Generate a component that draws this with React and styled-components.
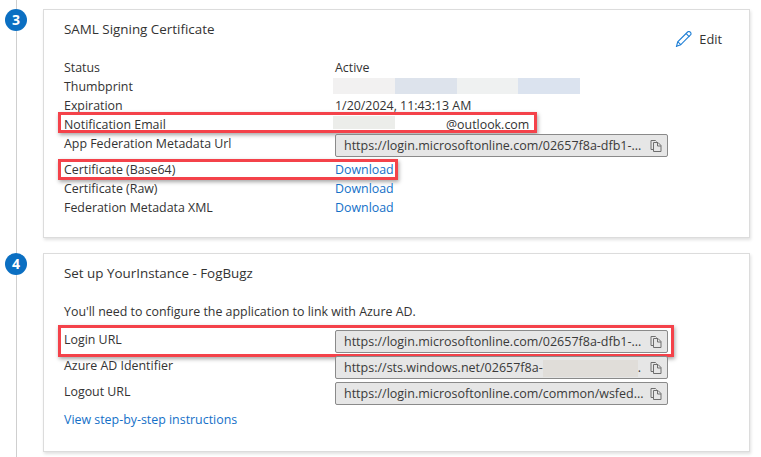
import styled, { createGlobalStyle } from "styled-components";

const GlobalStyle = createGlobalStyle`
  html, body {
    margin: 0;
    background: #fff;
    overflow: hidden;
  }
  body {
    font-family: "Open Sans", "Noto Sans", sans-serif;
    font-size: 12.4px;
    color: #333;
  }
`;

const Page = styled.div`
  width: 761px;
  height: 457px;
  box-sizing: border-box;
  padding-top: 9px;
  display: flex;
  flex-direction: column;
  gap: 15px;
  background: linear-gradient(#cfcfcf, #cfcfcf) 16px 0 / 1px 100% no-repeat;
`;

const Step = styled.section`
  display: flex;
  align-items: flex-start;
  padding-left: 5px;
`;

const Badge = styled.div`
  width: 22px;
  height: 22px;
  flex: none;
  margin-right: 16px;
  border-radius: 50%;
  background: #0b6fc2;
  color: #fff;
  font-family: "Open Sans", sans-serif;
  font-weight: 700;
  font-size: 14px;
  line-height: 22px;
  text-align: center;
`;

const Card = styled.div`
  position: relative;
  width: 707px;
  height: ${(p) => p.$height}px;
  box-sizing: border-box;
  padding: 10px 20px 0;
  background: #fff;
  border: 1px solid #dcdcdc;
  box-shadow: 1px 2px 3px rgba(0, 0, 0, 0.12);
`;

const Title = styled.h2`
  margin: 0 0 ${(p) => p.$gap}px;
  font-size: 13.4px;
  font-weight: 400;
  line-height: 19px;
  color: #333;
`;

const EditButton = styled.div`
  position: absolute;
  top: 20px;
  right: 27px;
  display: flex;
  align-items: center;
  gap: 7px;
  font-size: 12.8px;
  line-height: 18px;
`;

const Intro = styled.p`
  margin: 0 0 9px;
  line-height: 19px;
`;

const Rows = styled.div`
  display: flex;
  flex-direction: column;
`;

const Row = styled.div`
  position: relative;
  display: grid;
  grid-template-columns: 271px 1fr;
  height: ${(p) => p.$height || 19}px;
  line-height: 19px;
  white-space: nowrap;
`;

const Value = styled.div`
  display: flex;
  height: 19px;
`;

const Blur = styled.span`
  display: inline-block;
  flex: none;
  width: ${(p) => p.$width}px;
  height: ${(p) => p.$height || 16}px;
  margin-top: ${(p) => p.$top || 1}px;
  margin-left: ${(p) => p.$left || 0}px;
  background: ${(p) => p.$color};
`;

const Link = styled.a`
  color: #1470c8;
  text-decoration: none;
`;

const Field = styled.div`
  width: 333px;
  height: 23px;
  box-sizing: border-box;
  display: flex;
  align-items: center;
  padding: 0 5px 0 8px;
  background: #e6e6e6;
  border: 1px solid #8a8a8a;
  border-radius: 2px;
  font-size: 12.5px;
  color: #3a3a3a;
`;

const FieldText = styled.span`
  flex: 1;
  display: flex;
  align-items: center;
  overflow: hidden;
`;

const Highlight = styled.div`
  position: absolute;
  left: -6px;
  top: ${(p) => p.$top}px;
  width: ${(p) => p.$width}px;
  height: ${(p) => p.$height}px;
  box-sizing: border-box;
  border: 3px solid #f4424a;
  box-shadow: 1px 2px 4px rgba(0, 0, 0, 0.35);
  pointer-events: none;
`;

const Footer = styled.div`
  margin-top: 2px;
  line-height: 19px;
`;

const PencilIcon = () => (
  <svg width="17" height="17" viewBox="0 0 17 17" fill="none" stroke="#1f7fd6" strokeWidth="1.1">
    <path d="M1.5 15.500l1.200-4.600L12.600 1c.7-.7 1.800-.7 2.500 0l.4.4c.7.7.7 1.800 0 2.500l-9.900 9.900-4.600 1.700z" />
    <path d="M11.200 2.600l3.200 3.200M2.900 10.900l3.200 2.900" />
  </svg>
);

const CopyIcon = () => (
  <svg width="12" height="12" viewBox="0 0 12 12" fill="none" stroke="#6e6e6e" strokeWidth="1">
    <path d="M3.500 9.500h-2.500v-9h4.500l1 1" />
    <path d="M3.500 2.500h4.500l3 3v6h-7.500z" />
    <path d="M7.500 2.500v3.500h3.500" />
  </svg>
);

const UrlField = ({ children }) => (
  <Field>
    <FieldText>{children}</FieldText>
    <CopyIcon />
  </Field>
);

export default function App() {
  return (
    <Page>
      <GlobalStyle />
      <Step>
        <Badge>3</Badge>
        <Card $height={229}>
          <Title $gap={19}>SAML Signing Certificate</Title>
          <EditButton>
            <PencilIcon />
            Edit
          </EditButton>
          <Rows>
            <Row>
              <span>Status</span>
              <Value>Active</Value>
            </Row>
            <Row>
              <span>Thumbprint</span>
              <Value>
                <Blur $width={62} $left={-2} $color="#f2f1f1" />
                <Blur $width={62} $color="#dde3ec" />
                <Blur $width={61} $color="#eff1f1" />
                <Blur $width={62} $color="#dbe3ef" />
              </Value>
            </Row>
            <Row>
              <span>Expiration</span>
              <Value>1/20/2024, 11:43:13 AM</Value>
            </Row>
            <Row>
              <span>Notification Email</span>
              <Value>
                <Blur $width={62} $height={13} $left={-2} $color="#ecedea" />
                <Blur $width={51} $height={13} $color="#fff" />
                @outlook.com
              </Value>
              <Highlight $top={-3} $width={479} $height={21} />
            </Row>
            <Row $height={26}>
              <span>App Federation Metadata Url</span>
              <UrlField>https://login.microsoftonline.com/02657f8a-dfb1-...</UrlField>
            </Row>
            <Row>
              <span>Certificate (Base64)</span>
              <Link>Download</Link>
              <Highlight $top={-1} $width={340} $height={21} />
            </Row>
            <Row>
              <span>Certificate (Raw)</span>
              <Link>Download</Link>
            </Row>
            <Row>
              <span>Federation Metadata XML</span>
              <Link>Download</Link>
            </Row>
          </Rows>
        </Card>
      </Step>
      <Step>
        <Badge>4</Badge>
        <Card $height={199}>
          <Title $gap={19}>Set up YourInstance - FogBugz</Title>
          <Intro>You'll need to configure the application to link with Azure AD.</Intro>
          <Rows>
            <Row $height={26}>
              <span>Login URL</span>
              <UrlField>https://login.microsoftonline.com/02657f8a-dfb1-...</UrlField>
              <Highlight $top={-5} $width={616} $height={32} />
            </Row>
            <Row $height={26}>
              <span>Azure AD Identifier</span>
              <UrlField>
                https://sts.windows.net/02657f8a-
                <Blur $width={95} $height={17} $top={0} $color="#e0ddd9" />
                .
              </UrlField>
            </Row>
            <Row $height={26}>
              <span>Logout URL</span>
              <UrlField>https://login.microsoftonline.com/common/wsfed...</UrlField>
            </Row>
          </Rows>
          <Footer>
            <Link>View step-by-step instructions</Link>
          </Footer>
        </Card>
      </Step>
    </Page>
  );
}
